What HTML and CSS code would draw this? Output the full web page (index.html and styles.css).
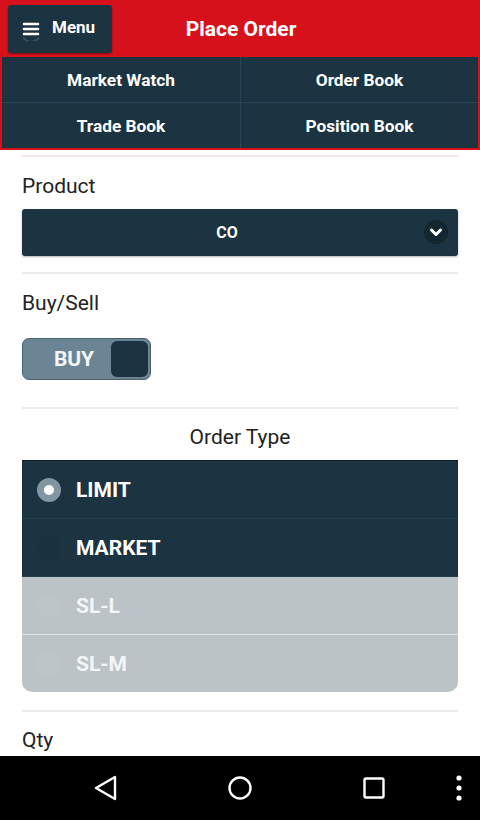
FILE: index.html
```html
<!DOCTYPE html>
<html lang="en">

<head>
    <meta charset="UTF-8">
    <meta name="viewport" content="width=device-width, initial-scale=1.0">
    <title>Place Order</title>
    <link rel="stylesheet" href="styles.css">
</head>

<body>
    <div class="screen">
        <div class="page">
            <div class="header">
                <button class="menu-btn">
                    <span class="menu-icon">
                        <svg width="24" height="24" viewBox="0 0 24 24">
                            <path d="M4 20.5a10 10 0 0 0 16 0" fill="none" stroke="#3b5463" stroke-width="1.5" />
                            <path d="M5 7h14M5 12h14M5 17h14" stroke="#fff" stroke-width="2.6" stroke-linecap="round" />
                        </svg>
                    </span>
                    Menu
                </button>
                <h1 class="title">Place Order</h1>
            </div>

            <div class="nav-grid">
                <a class="nav-item">Market Watch</a>
                <a class="nav-item">Order Book</a>
                <a class="nav-item">Trade Book</a>
                <a class="nav-item">Position Book</a>
            </div>

            <div class="content">
                <hr class="divider">

                <label class="label">Product</label>
                <div class="select">
                    <span>CO</span>
                    <span class="select-arrow">
                        <svg width="16" height="16" viewBox="0 0 16 16">
                            <path d="M3.5 6l4.5 4.5 4.5-4.5" fill="none" stroke="#fff" stroke-width="3" stroke-linecap="round" stroke-linejoin="round" />
                        </svg>
                    </span>
                </div>

                <hr class="divider">

                <label class="label">Buy/Sell</label>
                <div class="toggle">
                    <span class="toggle-text">BUY</span>
                    <span class="toggle-knob"></span>
                </div>

                <hr class="divider">

                <div class="label label-center">Order Type</div>
                <div class="order-types">
                    <div class="order-row selected">
                        <span class="radio on"></span>LIMIT
                    </div>
                    <div class="order-row">
                        <span class="radio"></span>MARKET
                    </div>
                    <div class="order-row disabled">
                        <span class="radio"></span>SL-L
                    </div>
                    <div class="order-row disabled">
                        <span class="radio"></span>SL-M
                    </div>
                </div>

                <hr class="divider">

                <label class="label label-qty">Qty</label>
            </div>
        </div>

        <div class="system-bar">
            <svg width="26" height="28" viewBox="0 0 26 28">
                <path d="M3 14L22 3v22z" fill="none" stroke="#fff" stroke-width="2.4" stroke-linejoin="round" />
            </svg>
            <svg width="26" height="26" viewBox="0 0 26 26">
                <circle cx="13" cy="13" r="10.5" fill="none" stroke="#fff" stroke-width="2.4" />
            </svg>
            <svg width="24" height="24" viewBox="0 0 24 24">
                <rect x="2.5" y="2.5" width="19" height="19" rx="1.5" fill="none" stroke="#fff" stroke-width="2.4" />
            </svg>
            <svg class="dots" width="8" height="28" viewBox="0 0 8 28">
                <circle cx="4" cy="4" r="2.6" fill="#fff" />
                <circle cx="4" cy="14" r="2.6" fill="#fff" />
                <circle cx="4" cy="24" r="2.6" fill="#fff" />
            </svg>
        </div>
    </div>
</body>

</html>
```

FILE: styles.css
```css
body {
    margin: 0;
    font-family: Roboto, "Liberation Sans", sans-serif;
    background: #fff;
}

.screen {
    display: flex;
    flex-direction: column;
    height: 820px;
    overflow: hidden;
}

.page {
    flex: 1;
    overflow: hidden;
}

.header {
    height: 57px;
    background: #d7111b;
    display: flex;
    align-items: center;
    position: relative;
}

.menu-btn {
    margin-left: 8px;
    width: 104px;
    height: 48px;
    background: #1c3341;
    border: 0;
    border-radius: 3px;
    color: #fff;
    font-family: inherit;
    font-size: 17px;
    font-weight: bold;
    display: flex;
    align-items: center;
    padding: 0 0 4px 11px;
    box-shadow: 0 1px 2px rgba(0, 0, 0, 0.4);
}

.menu-icon {
    display: flex;
    margin-right: 9px;
    margin-top: 4px;
}

.title {
    flex: 1;
    margin: 0 0 0 -8px;
    text-align: center;
    color: #fff;
    font-size: 21px;
    font-weight: bold;
    padding-right: 112px;
    padding-left: 10px;
}

.nav-grid {
    display: grid;
    grid-template-columns: 1fr 1fr;
    grid-template-rows: 46px 45px;
    background: #1c3341;
    border: 2px solid #d7111b;
    border-top: 0;
}

.nav-item {
    display: flex;
    align-items: center;
    justify-content: center;
    color: #fff;
    font-size: 17.3px;
    font-weight: bold;
    border-left: 1px solid #2a4556;
}

.nav-item:nth-child(odd) {
    border-left: 0;
}

.nav-item:nth-child(-n+2) {
    border-bottom: 1px solid #2a4556;
}

.content {
    padding: 0 22px;
    display: flex;
    flex-direction: column;
}

.divider {
    margin: 0;
    border: 0;
    height: 2px;
    background: #ececec;
}

.content > .divider:first-child {
    margin-top: 5px;
    background: #f2e6e6;
}

.label {
    font-size: 21px;
    color: #222;
    line-height: 24px;
    margin-top: 17px;
}

.label-center {
    text-align: center;
    margin-top: 16px;
}

.label-qty {
    margin-top: 16px;
}

.select {
    margin-top: 11px;
    height: 47px;
    background: #1c3341;
    border-radius: 3px;
    display: flex;
    align-items: center;
    justify-content: center;
    padding-right: 26px;
    position: relative;
    color: #fff;
    font-size: 16px;
    font-weight: bold;
    box-shadow: 0 1px 2px rgba(0, 0, 0, 0.3);
    margin-bottom: 16px;
}

.select-arrow {
    position: absolute;
    right: 10px;
    top: 11px;
    width: 24px;
    height: 24px;
    border-radius: 50%;
    background: #14262f;
    display: flex;
    align-items: center;
    justify-content: center;
}

.toggle {
    margin-top: 23px;
    width: 125px;
    height: 40px;
    background: #6b8594;
    border: 1px solid #4d616c;
    border-radius: 7px;
    display: flex;
    align-items: center;
    justify-content: space-between;
    padding: 0 2px 0 0;
    margin-bottom: 27px;
}

.toggle-text {
    flex: 1;
    text-align: center;
    color: #f4f6f7;
    font-size: 21px;
    font-weight: bold;
    padding-left: 14px;
}

.toggle-knob {
    width: 37px;
    height: 36px;
    border-radius: 6px;
    background: #1c3341;
}

.order-types {
    margin-top: 11px;
    border-top: 1px solid #111e26;
    border-radius: 0 0 10px 10px;
    overflow: hidden;
    margin-bottom: 18px;
}

.order-row {
    height: 57px;
    display: flex;
    align-items: center;
    padding-left: 15px;
    background: #1c3341;
    color: #fff;
    font-size: 21px;
    font-weight: bold;
    border-bottom: 1px solid #24404f;
}

.order-row.disabled {
    background: #bcc3c6;
    color: #f3f5f6;
    border-bottom: 1px solid #dfe3e5;
}

.order-row:last-child {
    border-bottom: 0;
    height: 57px;
}

.radio {
    width: 24px;
    height: 24px;
    border-radius: 50%;
    margin-right: 15px;
    background: rgba(0, 0, 0, 0.04);
    box-sizing: border-box;
}

.order-row.disabled .radio {
    background: rgba(255, 255, 255, 0.04);
}

.radio.on {
    background: #fff;
    border: 7px solid #8196a1;
}

.system-bar {
    height: 64px;
    background: #000;
    display: flex;
    align-items: center;
}

.system-bar svg:nth-child(1) {
    margin-left: 93px;
}

.system-bar svg:nth-child(2) {
    margin-left: 108px;
}

.system-bar svg:nth-child(3) {
    margin-left: 109px;
}

.system-bar .dots {
    margin-left: 69px;
}
```
